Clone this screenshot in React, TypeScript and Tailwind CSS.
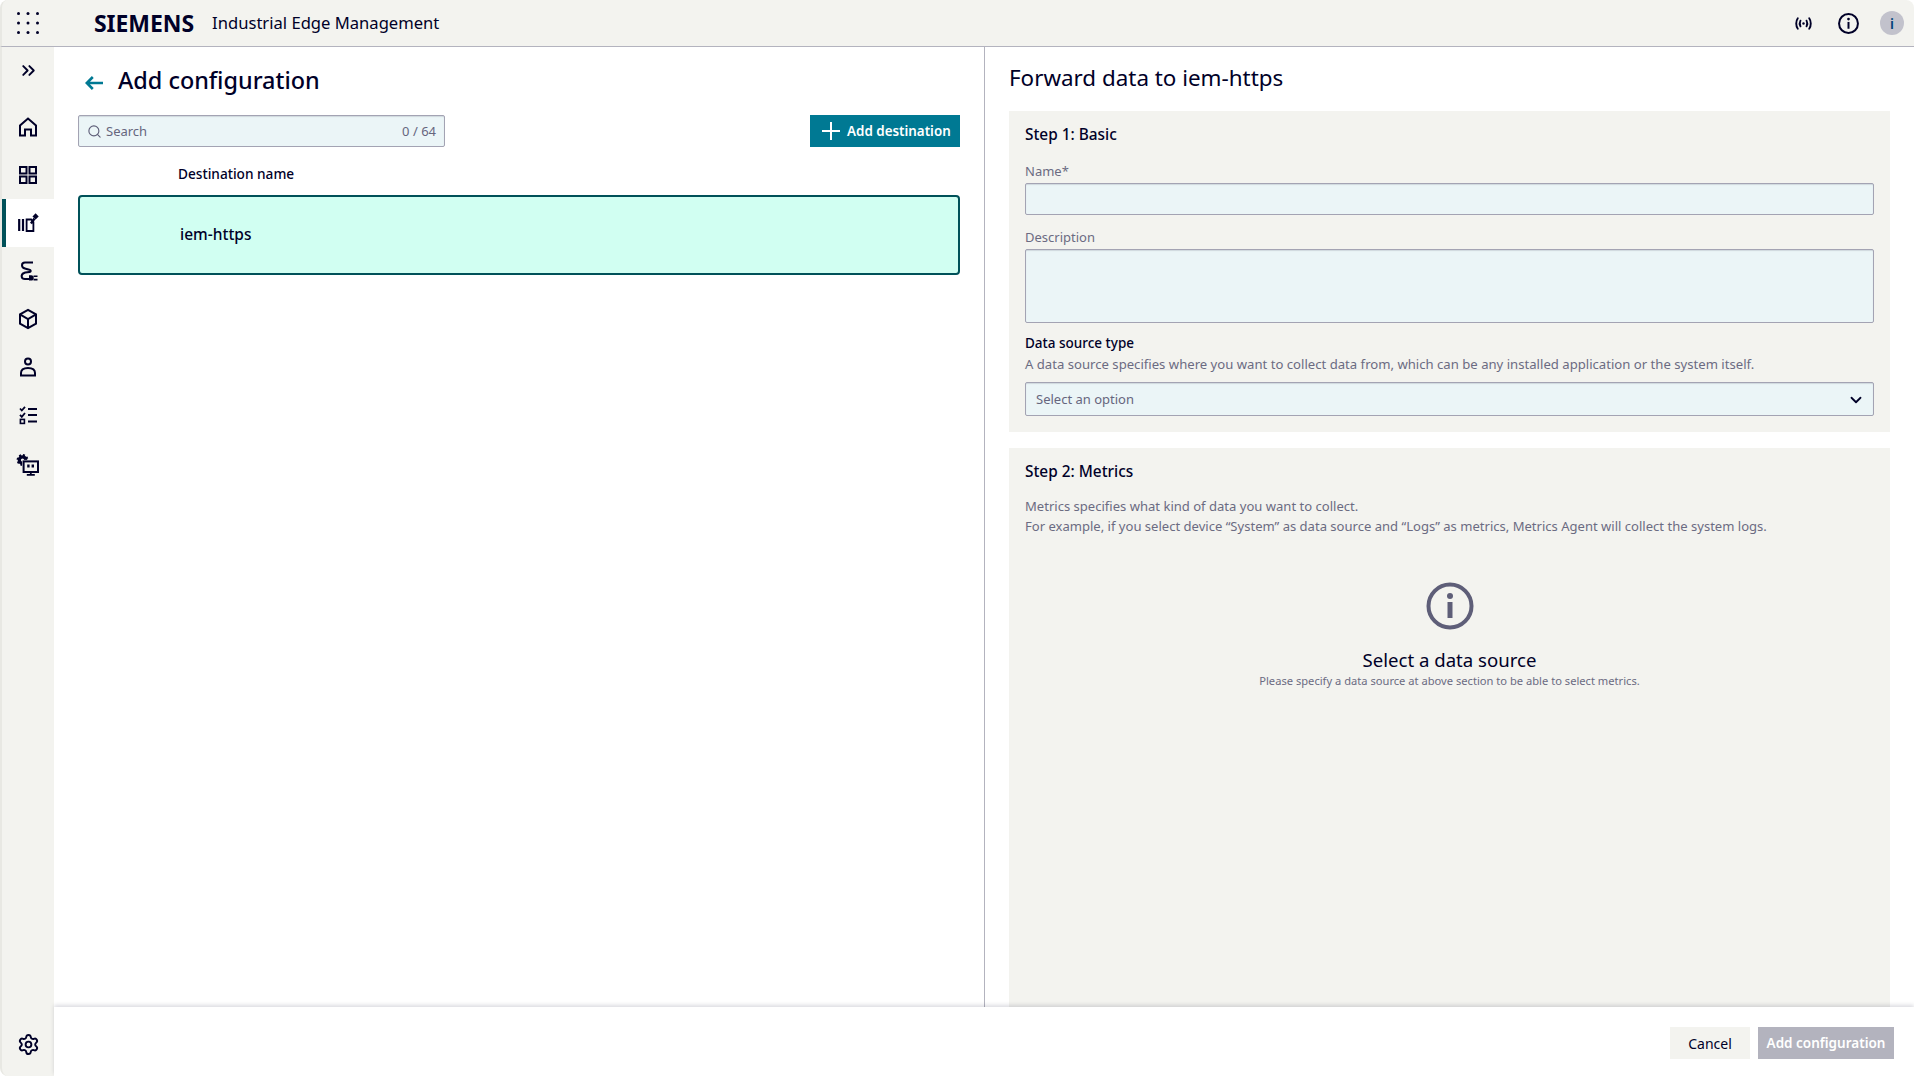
import React from "react";
import { ChevronDown, ChevronsRight, Search, Settings } from "lucide-react";

const navy = "#000028";

function Ico({ children, className = "" }: { children: React.ReactNode; className?: string }) {
  return (
    <svg viewBox="0 0 24 24" fill="none" stroke={navy} strokeWidth="2" className={`h-6 w-6 ${className}`}>
      {children}
    </svg>
  );
}

function NavItem({ active, children, className = "h-12" }: { active?: boolean; children: React.ReactNode; className?: string }) {
  return (
    <div className={`flex items-center justify-center ${className} ${active ? "bg-white border-l-4 border-[#005159] pr-1" : ""}`}>
      {children}
    </div>
  );
}

function Field({ label, h }: { label: string; h: string }) {
  return (
    <div className="flex flex-col">
      <div className="mb-[2px] text-[13px] leading-[20px] text-[#6b6b82]">{label}</div>
      <div className={`${h} rounded-[2px] border border-[#a3a3b3] bg-[#ebf5f7] shadow-[inset_0_1px_1px_rgba(0,0,40,0.12)]`} />
    </div>
  );
}

export default function App() {
  return (
    <div
      className="flex h-screen w-full flex-col overflow-hidden bg-white text-[#000028]"
      style={{ fontFamily: '"Noto Sans", "Open Sans", sans-serif' }}
    >
      <header className="flex h-[47px] shrink-0 items-center rounded-t-[8px] border-b border-l-2 border-b-[#b3b3be] border-l-[#e8e8e3] bg-[#f3f3ef] pl-[15px] pr-[10px]">
        <svg viewBox="0 0 22 22" className="h-[22px] w-[22px]" fill={navy}>
          {[1.5, 11, 20.5].map((y) =>
            [1.5, 11, 20.5].map((x) => <circle key={`${x}-${y}`} cx={x} cy={y} r="1.5" />)
          )}
        </svg>
        <div className="ml-[55px] pt-[1px] text-[23px] font-bold leading-none tracking-[-0.05px]">SIEMENS</div>
        <div className="ml-[18px] pt-[1px] text-[16.6px] leading-none">Industrial Edge Management</div>
        <div className="ml-auto flex items-center">
          <svg viewBox="0 0 20 14" className="h-[15px] w-[19px]" fill="none" stroke={navy} strokeWidth="2" strokeLinecap="round">
            <path d="M4 1.5C1.8 4.5 1.8 9.5 4 12.5" />
            <path d="M6.8 4C5.8 5.8 5.8 8.2 6.8 10" />
            <path d="M16 1.5C18.2 4.5 18.2 9.5 16 12.5" />
            <path d="M13.2 4C14.2 5.8 14.2 8.2 13.2 10" />
            <circle cx="10" cy="7" r="1.3" fill={navy} stroke="none" />
          </svg>
          <svg viewBox="0 0 20 20" className="ml-[25px] mr-[1px] h-[21px] w-[21px]" fill="none" stroke={navy} strokeWidth="1.9">
            <circle cx="10" cy="10" r="9" />
            <circle cx="10" cy="5.8" r="1.3" fill={navy} stroke="none" />
            <path d="M10 8.5V15" />
          </svg>
          <div className="ml-[20px] flex h-6 w-6 items-center justify-center rounded-full bg-[#c2c2cc] text-[14px] font-semibold text-[#00447a]">i</div>
        </div>
      </header>

      <div className="flex min-h-0 flex-1">
        <aside className="flex w-[54px] shrink-0 flex-col rounded-bl-[8px] border-l-2 border-[#e8e8e3] bg-[#f3f3ef]">
          <NavItem className="mb-[8px] h-[46px]"><ChevronsRight size={21} color={navy} strokeWidth={2.2} /></NavItem>
          <div className="h-[2px]" />
          <NavItem>
            <Ico><path d="M4 20.5V10.5L12 3.5L20 10.5V20.5H15V14.5H9V20.5Z" /></Ico>
          </NavItem>
          <NavItem>
            <Ico>
              <rect x="4" y="4" width="6.5" height="6.5" />
              <rect x="13.5" y="4" width="6.5" height="6.5" />
              <rect x="4" y="13.5" width="6.5" height="6.5" />
              <rect x="13.5" y="13.5" width="6.5" height="6.5" />
            </Ico>
          </NavItem>
          <NavItem active>
            <Ico>
              <path d="M3.2 8V20M7 8V20" strokeWidth="2.2" />
              <path d="M10.6 20V8.5H15.2L17.4 11V20Z" strokeWidth="1.8" />
              <path d="M15 12.5L18.5 7.5" strokeWidth="2.4" />
              <rect x="17.4" y="3.2" width="4.4" height="4.4" transform="rotate(45 19.6 5.4)" fill={navy} stroke="none" />
            </Ico>
          </NavItem>
          <NavItem>
            <Ico>
              <path d="M17 3.5H9C5 3.5 5 8.5 9 9.5C13 10.5 15.5 11 14.5 12.5C13.5 13.7 10 13 8 14C4.5 15.5 5 20 9 20H13" />
              <path d="M13 16.2V21.6H15.2C18.6 21.6 18.6 16.2 15.2 16.2Z" fill={navy} stroke="none" />
              <path d="M17.5 17.2H21.5M17.5 20.6H21.5" strokeWidth="1.6" />
            </Ico>
          </NavItem>
          <NavItem>
            <Ico>
              <path d="M12 2.8L20 7.4V16.6L12 21.2L4 16.6V7.4Z" />
              <path d="M4 7.4L12 12L20 7.4M12 12V21.2" />
            </Ico>
          </NavItem>
          <NavItem>
            <Ico>
              <circle cx="12" cy="6.5" r="3" />
              <path d="M5 20.5V18C5 14.5 8 13 12 13C16 13 19 14.5 19 18V20.5Z" />
            </Ico>
          </NavItem>
          <NavItem>
            <Ico>
              <path d="M4 5.5L5.8 7.5L9 3.8M4 11.8L5.8 13.8L9 10" strokeWidth="1.8" />
              <rect x="4.4" y="16.4" width="4" height="4" strokeWidth="1.6" />
              <path d="M12 6H21M12 12H21M12 18.5H21" />
            </Ico>
          </NavItem>
          <NavItem className="h-[52px]">
            <Ico>
              <circle cx="6.5" cy="7" r="3.2" strokeWidth="3.2" fill="none" />
              <circle cx="6.5" cy="7" r="5" strokeWidth="1.8" strokeDasharray="2 1.9" />
              <rect x="7.6" y="8.4" width="14.4" height="10.6" fill="#f3f3ef" stroke="#f3f3ef" strokeWidth="3" />
              <rect x="7.6" y="8.4" width="14.4" height="10.6" fill="#f3f3ef" strokeWidth="2" />
              <path d="M11.2 13H13.6M15.6 13H18" strokeWidth="2.8" />
              <path d="M14.8 19V21.5M10.8 21.8H18.8" strokeWidth="1.8" />
            </Ico>
          </NavItem>
          <NavItem className="mt-auto h-[64px]">
            <Settings size={23} color={navy} strokeWidth={2} />
          </NavItem>
        </aside>

        <div className="flex min-w-0 flex-1 flex-col">
          <main className="flex min-h-0 flex-1">
            <section className="w-[931px] shrink-0 border-r border-[#b3b3be] px-[24px]">
              <div className="mt-[18px] flex h-[32px] items-center">
                <svg viewBox="0 0 18 14" className="ml-[7px] mt-[3px] h-[14px] w-[18px]" fill="none" stroke="#007993" strokeWidth="2.6">
                  <path d="M18 7H2M7.8 1L1.8 7L7.8 13" />
                </svg>
                <h1 className="ml-[15px] text-[23.4px] font-medium leading-none">Add configuration</h1>
              </div>
              <div className="mt-[18px] flex items-center justify-between">
                <div className="flex h-[32px] w-[367px] items-center rounded-[2px] border border-[#a3a3b3] bg-[#ebf5f7] px-[8px] pt-[1px] text-[13px] text-[#66667e] shadow-[inset_0_1px_1px_rgba(0,0,40,0.12)]">
                  <Search size={15} color="#5e5e78" strokeWidth={1.8} />
                  <span className="ml-[4px]">Search</span>
                  <span className="ml-auto">0 / 64</span>
                </div>
                <button className="flex h-[32px] w-[150px] items-center bg-[#007993] pl-[12px] text-[13.4px] font-semibold text-white">
                  <svg viewBox="0 0 18 18" className="h-[18px] w-[18px]" fill="none" stroke="#ffffff" strokeWidth="2">
                    <path d="M9 0V18M0 9H18" />
                  </svg>
                  <span className="ml-[7px]">Add destination</span>
                </button>
              </div>
              <div className="mt-[17px] pl-[100px] text-[13.65px] font-medium leading-[20px]">Destination name</div>
              <div className="mt-[11px] flex h-[80px] items-center rounded-[4px] border-2 border-[#005159] bg-[#d1fff2] pl-[100px] text-[15.5px] font-medium">
                iem-https
              </div>
            </section>

            <section className="flex min-w-0 flex-1 flex-col px-[24px]">
              <h2 className="mt-[15px] text-[22.4px] leading-[32px]">Forward data to iem-https</h2>
              <div className="mt-[17px] h-[321px] shrink-0 bg-[#f3f3ef] px-[16px] pt-[13px]">
                <div className="text-[15.4px] font-medium leading-[22px]">Step 1: Basic</div>
                <div className="mt-[15px] flex flex-col gap-[12px]">
                  <Field label="Name*" h="h-[32px]" />
                  <Field label="Description" h="h-[74px]" />
                </div>
                <div className="mt-[10px] text-[13.5px] font-medium leading-[20px]">Data source type</div>
                <div className="mt-[1px] text-[13.13px] leading-[20px] text-[#6b6b82]">
                  A data source specifies where you want to collect data from, which can be any installed application or the system itself.
                </div>
                <div className="mt-[8px] flex h-[34px] items-center justify-between rounded-[2px] border border-[#a3a3b3] bg-[#ebf5f7] pl-[10px] pr-[8px] pt-[1px] text-[13px] text-[#66667e] shadow-[inset_0_1px_1px_rgba(0,0,40,0.12)]">
                  <span>Select an option</span>
                  <ChevronDown size={18} color={navy} strokeWidth={2.4} />
                </div>
              </div>
              <div className="mt-[16px] flex flex-1 flex-col bg-[#f3f3ef] px-[16px] pt-[13px]">
                <div className="text-[15.4px] font-medium leading-[22px]">Step 2: Metrics</div>
                <div className="mt-[13px] text-[13.05px] leading-[20px] text-[#6b6b82]">
                  <p>Metrics specifies what kind of data you want to collect.</p>
                  <p>For example, if you select device “System” as data source and “Logs” as metrics, Metrics Agent will collect the system logs.</p>
                </div>
                <div className="mt-[46px] flex flex-col items-center">
                  <svg viewBox="0 0 48 48" className="h-12 w-12" fill="none" stroke="#5e5e78" strokeWidth="4">
                    <circle cx="24" cy="24" r="21.5" />
                    <circle cx="24" cy="14" r="3" fill="#5e5e78" stroke="none" />
                    <path d="M24 20V36" strokeWidth="5" />
                  </svg>
                  <div className="mt-[17px] text-[18.6px] leading-[26px]">Select a data source</div>
                  <div className="text-[11.15px] leading-[16px] text-[#6b6b82]">
                    Please specify a data source at above section to be able to select metrics.
                  </div>
                </div>
              </div>
            </section>
          </main>

          <footer className="relative flex h-[69px] shrink-0 items-start justify-end gap-[8px] bg-white pr-[20px] pt-[20px] shadow-[0_-2px_4px_rgba(0,0,40,0.14)]">
            <button className="h-[32px] w-[80px] bg-[#f3f3ef] text-[14px]">Cancel</button>
            <button className="h-[32px] w-[136px] bg-[#b3b3be] text-[13.5px] font-semibold text-white">Add configuration</button>
          </footer>
        </div>
      </div>
    </div>
  );
}
